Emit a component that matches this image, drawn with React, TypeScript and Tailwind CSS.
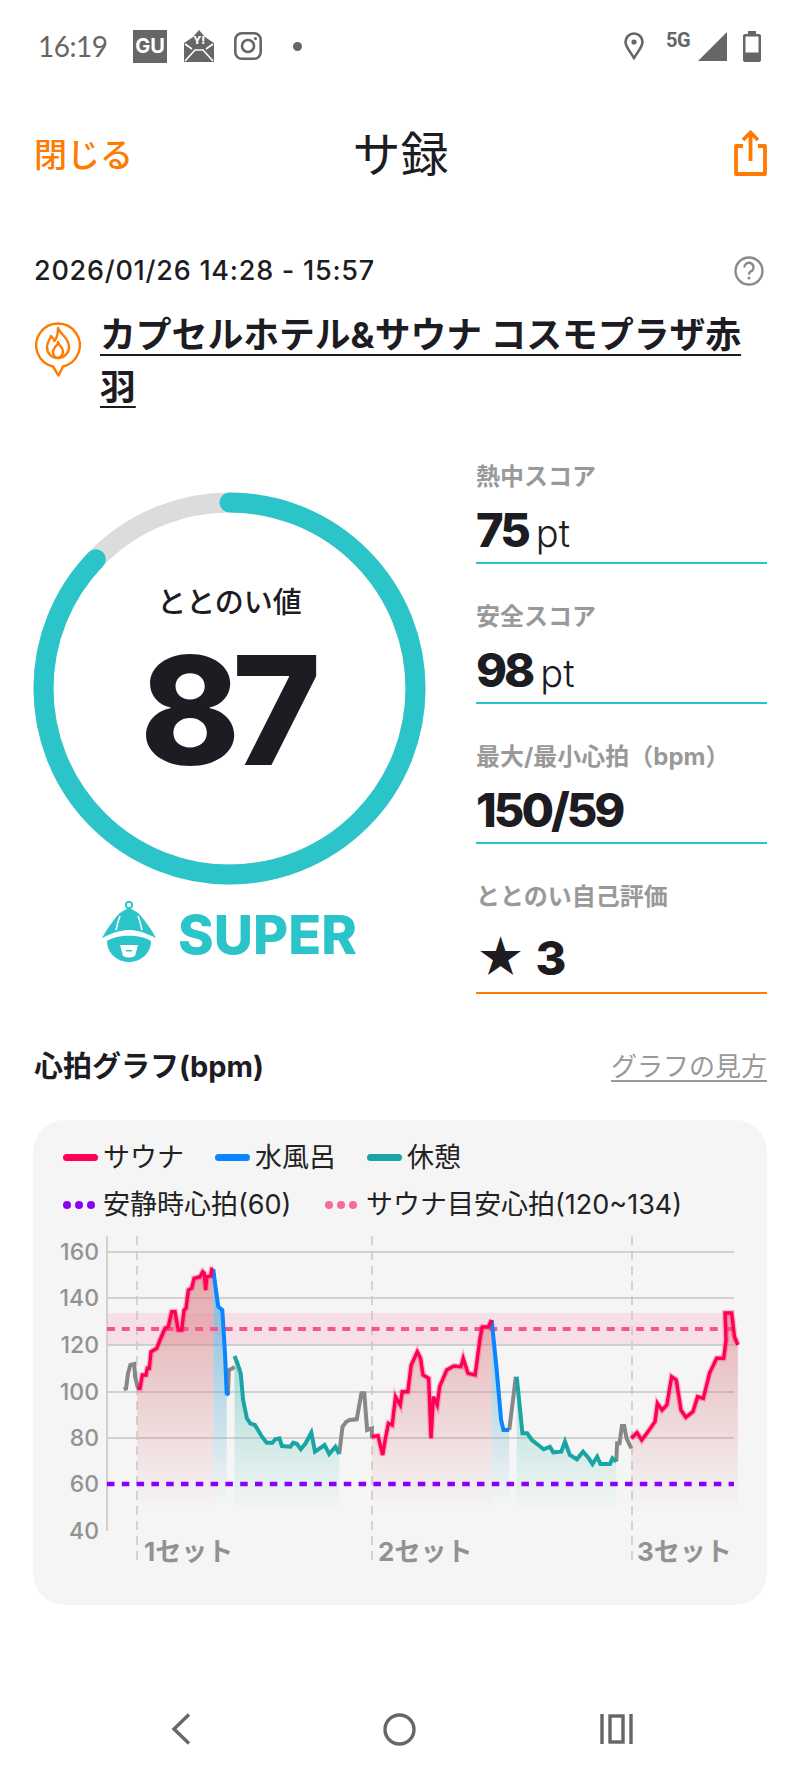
// Trace coordinates below come from the crops: z5 = crop at (30,1120) 3x, z7 = crop at (30,1340) 2.112x/3x
const z5 = (p: number[][]) => p.map(([x, y]) => [30 + x / 3, 1120 + y / 3]);
const z7 = (p: number[][]) => p.map(([x, y]) => [30 + x / 2.112, 1340 + y / 3]);

const red1 = z5([[322, 805], [330, 805], [337, 765], [348, 765], [352, 745], [358, 745], [363, 695], [380, 685], [390, 660], [405, 625], [415, 620], [425, 575], [435, 575], [445, 630], [455, 630], [462, 570], [468, 565], [475, 510], [485, 505], [492, 475], [510, 470], [518, 455], [523, 460], [527, 510], [530, 470], [542, 468], [545, 448], [550, 448]]);
const blue1 = z5([[550, 448], [555, 490], [565, 560], [577, 570], [585, 700], [590, 820], [597, 825]]);
const grey1 = z7([[198, 148], [203, 145], [207, 100], [212, 75], [220, 72], [222, 110], [228, 145]]);
const grey2 = z7([[418, 165], [420, 90], [428, 85], [432, 80]]);
const teal1 = z7([[432, 48], [438, 70], [445, 100], [450, 180], [458, 235], [465, 250], [475, 255], [490, 290], [500, 308], [512, 308], [518, 298], [527, 295], [532, 318], [550, 320], [556, 308], [564, 312], [572, 328], [582, 310], [594, 278], [602, 335], [612, 325], [622, 315], [632, 342], [645, 320], [653, 342]]);
const grey3 = z7([[653, 342], [660, 260], [668, 245], [675, 240], [690, 238], [700, 160], [706, 160], [712, 270], [722, 265], [722, 295]]);
const red2 = z7([[722, 290], [735, 287], [745, 345], [750, 300], [757, 250], [765, 255], [772, 170], [782, 195], [786, 155], [798, 155], [805, 75], [818, 35], [825, 55], [830, 105], [842, 115], [847, 295], [852, 170], [860, 195], [865, 140], [880, 90], [895, 78], [910, 80], [915, 55], [925, 100], [940, 105], [950, 0], [955, -39], [968, -39], [975, -60]]);
const blue2 = z7([[975, -60], [985, 80], [995, 240], [1000, 270], [1012, 270]]);
const grey4 = z7([[1012, 270], [1020, 180], [1026, 110]]);
const teal2 = z7([[1028, 110], [1035, 210], [1040, 280], [1050, 280], [1060, 300], [1085, 328], [1098, 320], [1105, 337], [1122, 335], [1130, 305], [1140, 345], [1155, 358], [1168, 335], [1180, 355], [1188, 372], [1198, 350], [1205, 372], [1225, 372], [1230, 355], [1238, 365]]);
const grey5 = z7([[1238, 365], [1240, 310], [1245, 310], [1250, 258], [1255, 258], [1260, 295], [1270, 325]]);
const red3 = z7([[1270, 295], [1282, 278], [1292, 300], [1305, 275], [1320, 245], [1325, 190], [1335, 210], [1345, 195], [1355, 110], [1365, 120], [1375, 210], [1385, 232], [1400, 215], [1410, 170], [1422, 175], [1435, 100], [1450, 55], [1465, 55], [1470, 0], [1468, -81], [1482, -81], [1488, -10], [1495, 15]]);

const line = (p: number[][]) => p.map(([x, y]) => `${x.toFixed(1)},${y.toFixed(1)}`).join(' ');
const area = (p: number[][], bottom = 1512) =>
  `${line(p)} ${p[p.length - 1][0].toFixed(1)},${bottom} ${p[0][0].toFixed(1)},${bottom}`;

function HeartChart() {
  const grid = [1252, 1298, 1345, 1392, 1438];
  const ticks = [[160, 1252], [140, 1298], [120, 1345], [100, 1392], [80, 1438], [60, 1484], [40, 1531]];
  const sets = [[144, '1セット'], [378, '2セット'], [637, '3セット']] as const;
  return (
    <svg viewBox="33 1230 734 350" className="block w-[734px] h-[350px] mt-[10px]">
      <defs>
        <linearGradient id="redFill" gradientUnits="userSpaceOnUse" x1="0" y1="1260" x2="0" y2="1512">
          <stop offset="0" stopColor="#d9797f" stopOpacity="0.65" />
          <stop offset="1" stopColor="#d9797f" stopOpacity="0" />
        </linearGradient>
        <linearGradient id="blueFill" gradientUnits="userSpaceOnUse" x1="0" y1="1300" x2="0" y2="1505">
          <stop offset="0" stopColor="#5aaed2" stopOpacity="0.7" />
          <stop offset="1" stopColor="#5aaed2" stopOpacity="0" />
        </linearGradient>
        <linearGradient id="tealFill" gradientUnits="userSpaceOnUse" x1="0" y1="1360" x2="0" y2="1512">
          <stop offset="0" stopColor="#5cc4b6" stopOpacity="0.5" />
          <stop offset="1" stopColor="#5cc4b6" stopOpacity="0" />
        </linearGradient>
      </defs>

      <rect x="107" y="1313" width="627" height="32" fill="#f7dfe7" />
      {grid.map((y) => (
        <line key={y} x1="107" x2="734" y1={y} y2={y} stroke="#c4c4c4" strokeWidth="1.5" />
      ))}
      <line x1="107" x2="107" y1="1236" y2="1531" stroke="#c4c4c4" strokeWidth="1.5" />
      {[137, 372, 632].map((x) => (
        <line key={x} x1={x} x2={x} y1="1236" y2="1562" stroke="#c8c8c8" strokeWidth="1.5" strokeDasharray="9 6" />
      ))}

      <polygon points={area(red1)} fill="url(#redFill)" />
      <polygon points={area(blue1.slice(0, 6), 1505)} fill="url(#blueFill)" />
      <polygon points={area(teal1)} fill="url(#tealFill)" />
      <polygon points={area(red2)} fill="url(#redFill)" />
      <polygon points={area(blue2, 1505)} fill="url(#blueFill)" />
      <polygon points={area(teal2)} fill="url(#tealFill)" />
      <polygon points={area(red3)} fill="url(#redFill)" />

      <line x1="107" x2="734" y1="1329" y2="1329" stroke="#f4578d" strokeWidth="4" strokeDasharray="8 6.7" />
      <line x1="107" x2="734" y1="1484" y2="1484" stroke="#8c00f5" strokeWidth="4.5" strokeDasharray="7.5 7.3" />

      {[grey1, grey2, grey3, grey4, grey5].map((p, i) => (
        <polyline key={i} points={line(p)} fill="none" stroke="#888888" strokeWidth="4" />
      ))}
      {[teal1, teal2].map((p, i) => (
        <polyline key={i} points={line(p)} fill="none" stroke="#19a5a5" strokeWidth="4" />
      ))}
      {[blue1, blue2].map((p, i) => (
        <polyline key={i} points={line(p)} fill="none" stroke="#0a84ff" strokeWidth="4" />
      ))}
      {[red1, red2, red3].map((p, i) => (
        <g key={i}>
          <polyline points={line(p)} fill="none" stroke="#ff0055" strokeOpacity="0.25" strokeWidth="6" />
          <polyline points={line(p)} fill="none" stroke="#ff0055" strokeWidth="3.4" />
        </g>
      ))}

      {ticks.map(([v, y]) => (
        <text key={v} x="99" y={y + 8} textAnchor="end" fontSize="23" fontWeight="500" fill="#929292">{v}</text>
      ))}
      {sets.map(([x, label]) => (
        <text key={label} x={x} y="1561" fontSize="26" fontWeight="700" fill="#929292">{label}</text>
      ))}
    </svg>
  );
}

function StatusBar() {
  return (
    <div className="flex items-center h-[92px] pl-[38px] pr-[39px] text-[#666666]">
      <span className="w-[95px] text-[28px] font-['Lato','Noto_Sans_CJK_JP',sans-serif] tracking-[-0.5px]">16:19</span>
      <span className="flex items-center justify-center w-[34px] h-[33px] bg-[#666666] text-white text-[20px] font-bold leading-none">GU</span>
      <svg viewBox="0 0 30 32" className="w-[30px] h-[32px] ml-[17px]">
        <path d="M0 13 L9 7 L15 0 L21 7 L30 13 V32 H0 Z" fill="#666666" />
        <path d="M1 31 L11 20 H19 L29 31 M1 14 L8 19 M29 14 L22 19" stroke="#ffffff" strokeWidth="1.6" fill="none" />
        <text x="15" y="14" fontSize="11" fontWeight="800" fill="#ffffff" textAnchor="middle">Y!</text>
      </svg>
      <svg viewBox="0 0 28 28" className="w-[28px] h-[28px] ml-[20px]" fill="none" stroke="#666666" strokeWidth="2.6">
        <rect x="1.3" y="1.3" width="25.4" height="25.4" rx="6.5" />
        <circle cx="14" cy="14" r="6" />
        <circle cx="21.5" cy="6.5" r="1.6" fill="#666666" stroke="none" />
      </svg>
      <span className="w-[9px] h-[9px] ml-[31px] rounded-full bg-[#666666]" />
      <div className="flex items-center ml-auto">
        <svg viewBox="0 0 20 28" className="w-[20px] h-[28px]" fill="none" stroke="#666666" strokeWidth="2.6">
          <path d="M10 26 C5 18 1.5 14.5 1.5 10 A8.5 8.5 0 0 1 18.5 10 C18.5 14.5 15 18 10 26 Z" />
          <circle cx="10" cy="10" r="2.6" fill="#666666" stroke="none" />
        </svg>
        <span className="w-[28px] ml-[22px] mb-[13px] text-[20px] font-bold leading-none tracking-[-0.5px] font-['Roboto',sans-serif]">5G</span>
        <svg viewBox="0 0 29 29" className="w-[29px] h-[29px] ml-[4px]">
          <path d="M29 0 V29 H0 Z" fill="#666666" />
        </svg>
        <svg viewBox="0 0 18 31" className="w-[18px] h-[31px] ml-[16px]">
          <path d="M5 0 H13 V3 H16 A2 2 0 0 1 18 5 V29 A2 2 0 0 1 16 31 H2 A2 2 0 0 1 0 29 V5 A2 2 0 0 1 2 3 H5 Z" fill="#666666" />
          <rect x="2.5" y="5.5" width="13" height="16" fill="#ffffff" />
        </svg>
      </div>
    </div>
  );
}

function Header() {
  return (
    <div className="grid grid-cols-[1fr_auto_1fr] items-center h-[66px] mt-[30px] pl-[34px] pr-[33px]">
      <span className="text-[33px] font-medium leading-none text-[#ff7a00]">閉じる</span>
      <span className="text-[48px] leading-none text-[#1c1c22]">サ録</span>
      <svg viewBox="0 0 33 46" className="justify-self-end w-[33px] h-[46px] mb-[5px]" fill="none" stroke="#ff7a00" strokeWidth="3.8">
        <path d="M9 16 H2 V44 H31 V16 H24" strokeLinejoin="round" />
        <path d="M16.5 31 V3 M9 10 L16.5 2.5 L24 10" />
      </svg>
    </div>
  );
}

function VenueIcon() {
  return (
    <svg viewBox="0 0 46 56" className="w-[46px] h-[56px] shrink-0 mt-[12px]" fill="none" stroke="#ff7a00" strokeWidth="2.4" strokeLinejoin="round">
      <path d="M18 45.5 A21.8 21.8 0 1 1 28 45.5 L23.5 54.5 Z" />
      <path d="M23 7 C25 13 33 16 34 25 C34.5 32 29 37 23 37 C16 37 12 32 12 26 C12 21 15 19 16 15 C18 17 19 18 19.5 20 C22 17 23 12 23 7 Z" />
      <path d="M23 21 C24 25 28 26 28 30 C28 33 26 37 23 37 C20 37 18 34 18 31 C18 28 20 27 20.5 25 C22 25 23 23 23 21 Z" />
    </svg>
  );
}

function ScoreRing() {
  const r = 186;
  const c = 2 * Math.PI * r;
  return (
    <div className="relative w-[393px] h-[393px]">
      <svg viewBox="0 0 393 393" className="w-[393px] h-[393px] -rotate-90">
        <circle cx="196.5" cy="196.5" r={r} fill="none" stroke="#dcdcdc" strokeWidth="20" />
        <circle
          cx="196.5"
          cy="196.5"
          r={r}
          fill="none"
          stroke="#2bc4c9"
          strokeWidth="20"
          strokeLinecap="round"
          strokeDasharray={`${c * 0.872} ${c}`}
        />
      </svg>
      <div className="absolute inset-0 flex flex-col items-center pt-[92px]">
        <span className="text-[29px] font-medium leading-[38px] text-[#1c1c22]">ととのい値</span>
        <span className="mt-[13px] pr-[6px] text-[151px] font-extrabold leading-[150px] tracking-[-8px] text-[#1c1c22]">87</span>
      </div>
    </div>
  );
}

function SuperBadge() {
  return (
    <div className="flex items-center justify-center gap-[22px] w-[393px] mt-[16px]">
      <svg viewBox="0 0 54 62" className="w-[54px] h-[62px]">
        <circle cx="27" cy="4" r="3.2" fill="none" stroke="#2bc4c9" strokeWidth="2" />
        <path d="M27 7 C31 9 36 11 39 15 C44 21 49 28 54 37 C42 31 34 29 27 29 C20 29 12 31 0 37 C5 28 10 21 15 15 C18 11 23 9 27 7 Z" fill="#2bc4c9" />
        <path d="M18 15 C16 20 15 25 14 29 M36 15 C38 20 39 25 40 29" stroke="#ffffff" strokeWidth="1.6" fill="none" />
        <path d="M5 40 C16 33 38 33 49 40 C49 52 39 61 27 61 C15 61 5 52 5 40 Z" fill="#2bc4c9" />
        <path d="M18 44 H36 L33 55 C29 57 25 57 21 55 Z" fill="#ffffff" />
        <rect x="24" y="49" width="6" height="1.4" fill="#2bc4c9" />
      </svg>
      <span className="mt-[5px] text-[54px] font-extrabold leading-none text-[#2bc4c9]">SUPER</span>
    </div>
  );
}

function Stat({ label, value, unit, orange = false }: { label: string; value: string; unit?: string; orange?: boolean }) {
  return (
    <div className={`flex flex-col mb-[38px] border-b-2 ${orange ? 'h-[112px] border-[#ff7a00]' : 'h-[102px] border-[#22c6cb]'}`}>
      <span className="text-[24px] font-bold leading-[30px] text-[#999999] whitespace-nowrap">{label}</span>
      <div className={`flex items-baseline gap-[8px] text-[#1c1c22] ${orange ? 'mt-[20px]' : 'mt-[12px]'}`}>
        <span className={`text-[47px] font-extrabold leading-[52px] ${orange ? '' : 'tracking-[-3px]'}`}>{value}</span>
        {unit && <span className="text-[38px] font-light leading-none">{unit}</span>}
      </div>
    </div>
  );
}

function Legend() {
  const lineItem = 'w-[35px] h-[7px] rounded-full';
  return (
    <div className="flex flex-col gap-[16px] pt-[22px] pl-[30px] text-[27px] leading-[31px] text-[#222222]">
      <div className="flex items-center">
        <span className={`${lineItem} bg-[#ff0055]`} />
        <span className="ml-[5px] w-[112px]">サウナ</span>
        <span className={`${lineItem} bg-[#0a84ff]`} />
        <span className="ml-[5px] w-[112px]">水風呂</span>
        <span className={`${lineItem} bg-[#19a5a5]`} />
        <span className="ml-[5px]">休憩</span>
      </div>
      <div className="flex items-center">
        <span className="flex gap-[4px] w-[35px]">
          <i className="w-[8px] h-[8px] rounded-full bg-[#8c00f5]" />
          <i className="w-[8px] h-[8px] rounded-full bg-[#8c00f5]" />
          <i className="w-[8px] h-[8px] rounded-full bg-[#8c00f5]" />
        </span>
        <span className="ml-[5px] w-[222px]">安静時心拍(60)</span>
        <span className="flex gap-[4px] w-[35px]">
          <i className="w-[8px] h-[8px] rounded-full bg-[#f76a9c]" />
          <i className="w-[8px] h-[8px] rounded-full bg-[#f76a9c]" />
          <i className="w-[8px] h-[8px] rounded-full bg-[#f76a9c]" />
        </span>
        <span className="ml-[6px]">サウナ目安心拍(120~134)</span>
      </div>
    </div>
  );
}

function NavBar() {
  return (
    <div className="flex items-center mt-auto h-[32px] mb-[33px] pl-[171px]" >
      <svg viewBox="0 0 20 32" className="w-[20px] h-[32px]" fill="none" stroke="#666666" strokeWidth="3.4">
        <path d="M18 1.5 L3 16 L18 30.5" />
      </svg>
      <svg viewBox="0 0 33 33" className="w-[33px] h-[33px] ml-[192px]" fill="none" stroke="#666666" strokeWidth="3.4">
        <circle cx="16.5" cy="16.5" r="14.5" />
      </svg>
      <svg viewBox="0 0 33 30" className="w-[33px] h-[30px] ml-[184px]" fill="none" stroke="#666666" strokeWidth="3.4">
        <path d="M2 0 V30 M31 0 V30" />
        <rect x="10" y="2" width="13" height="26" />
      </svg>
    </div>
  );
}

export default function App() {
  return (
    <div className="flex flex-col w-[800px] h-[1778px] bg-white text-[#1c1c22] font-['Inter','Noto_Sans_CJK_JP',sans-serif]">
      <StatusBar />
      <Header />

      <div className="flex items-center justify-between mt-[67px] pl-[34px] pr-[36px]">
        <span className="text-[27px] font-medium leading-[32px] tracking-[0.75px]">2026/01/26 14:28 - 15:57</span>
        <svg viewBox="0 0 30 30" className="w-[30px] h-[30px]" fill="none" stroke="#8a8a8a" strokeWidth="2.4">
          <circle cx="15" cy="15" r="13.5" />
          <path d="M10.5 11.5 A4.5 4.5 0 1 1 16.5 15.5 C15.4 16 15 16.8 15 18.5" />
          <circle cx="15" cy="22" r="1.5" fill="#8a8a8a" stroke="none" />
        </svg>
      </div>

      <div className="flex gap-[19px] mt-[22px] pl-[35px] pr-[33px]">
        <VenueIcon />
        <span className="text-[35.8px] font-bold leading-[52px] underline underline-offset-[6px] decoration-[2px]">
          カプセルホテル&amp;サウナ コスモプラザ赤羽
        </span>
      </div>

      <div className="flex mt-[79px] pl-[33px] pr-[33px]">
        <div className="w-[443px] shrink-0">
          <ScoreRing />
          <SuperBadge />
        </div>
        <div className="flex-1 mt-[-30px]">
          <Stat label="熱中スコア" value="75" unit="pt" />
          <Stat label="安全スコア" value="98" unit="pt" />
          <Stat label="最大/最小心拍（bpm）" value="150/59" />
          <Stat label="ととのい自己評価" value="★ 3" orange />
        </div>
      </div>

      <div className="flex items-center justify-between mt-[18px] pl-[34px] pr-[33px]">
        <span className="text-[29px] font-bold leading-[34px]">心拍グラフ(bpm)</span>
        <span className="text-[26px] leading-[34px] text-[#999999] underline underline-offset-[4px]">グラフの見方</span>
      </div>

      <div className="mt-[36px] mx-[33px] h-[485px] rounded-[32px] bg-[#f5f5f5]">
        <Legend />
        <HeartChart />
      </div>

      <NavBar />
    </div>
  );
}
